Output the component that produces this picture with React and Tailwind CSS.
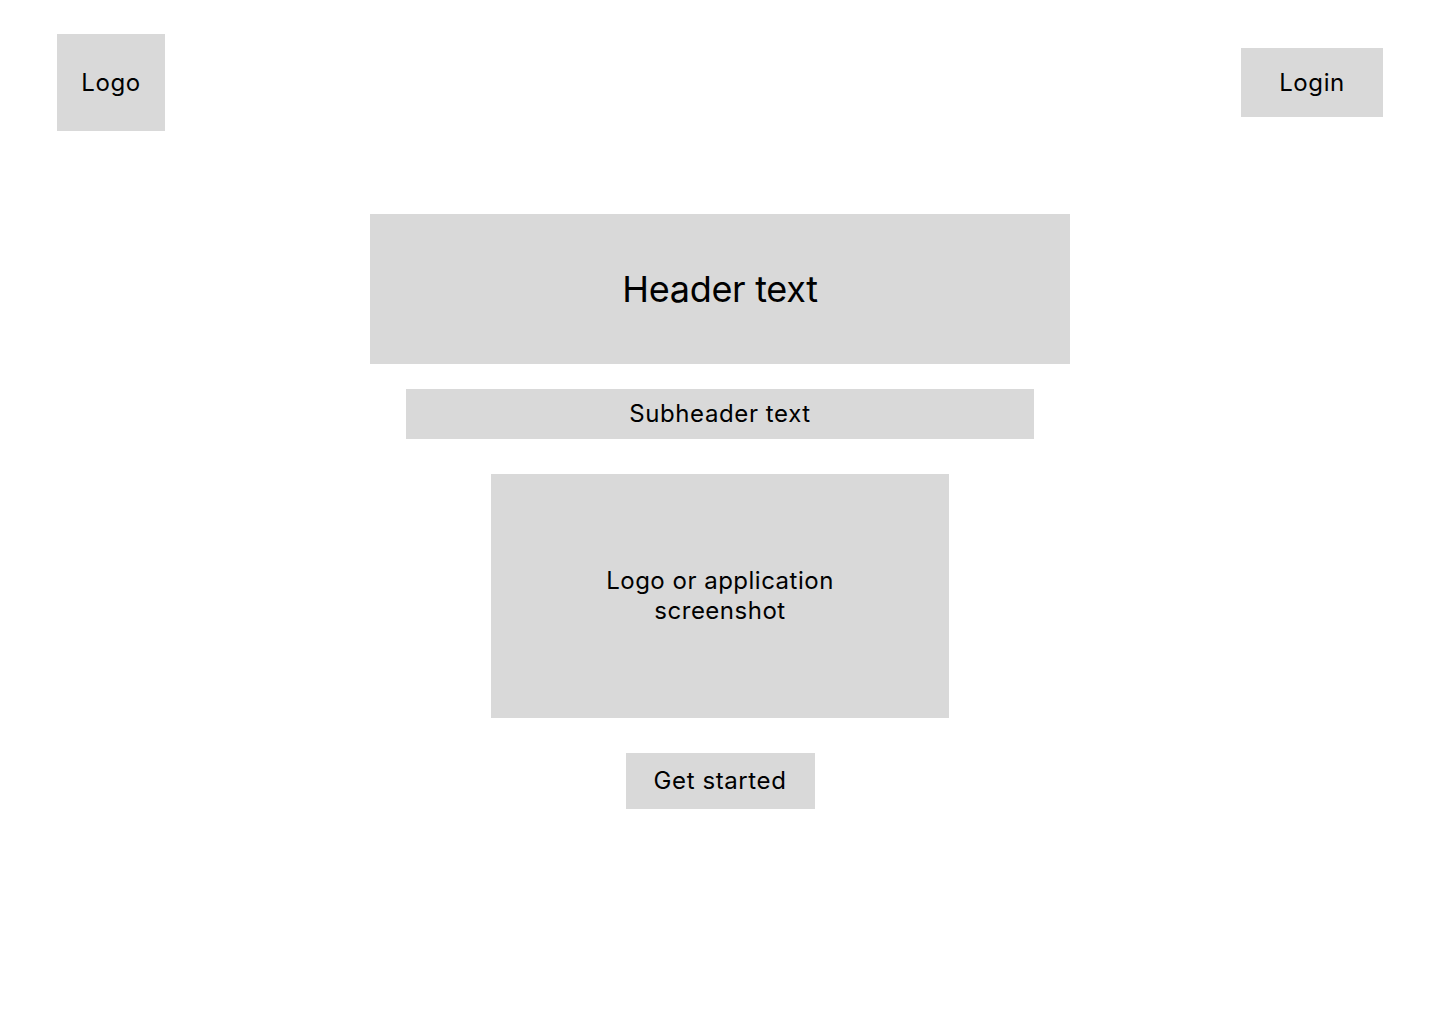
import React from 'react';

const App = () => {
    return (
        <div className="min-h-screen w-full bg-white text-black font-['Inter','Noto_Sans',sans-serif]">
            {/* Top bar */}
            <header className="flex items-center justify-between pl-[57px] pr-[57px] pt-[34px]">
                <div className="w-[108px] h-[97px] bg-[#d9d9d9] flex items-center justify-center text-[24px] tracking-[0.6px]">
                    Logo
                </div>
                <button className="w-[142px] h-[69px] bg-[#d9d9d9] flex items-center justify-center text-[24px] tracking-[0.6px]">
                    Login
                </button>
            </header>

            {/* Hero */}
            <main className="flex flex-col items-center mt-[83px]">
                <div className="w-[700px] h-[150px] bg-[#d9d9d9] flex items-center justify-center text-[36px] tracking-[-0.3px]">
                    Header text
                </div>
                <div className="mt-[25px] w-[628px] h-[50px] bg-[#d9d9d9] flex items-center justify-center text-[24px] tracking-[0.6px]">
                    Subheader text
                </div>
                <div className="mt-[35px] w-[458px] h-[244px] bg-[#d9d9d9] flex items-center justify-center">
                    <p className="w-[250px] text-center text-[24px] leading-[30px] tracking-[0.5px]">
                        Logo or application screenshot
                    </p>
                </div>
                <button className="mt-[35px] w-[189px] h-[56px] bg-[#d9d9d9] flex items-center justify-center text-[24px] tracking-[0.6px]">
                    Get started
                </button>
            </main>
        </div>
    );
};

export default App;
